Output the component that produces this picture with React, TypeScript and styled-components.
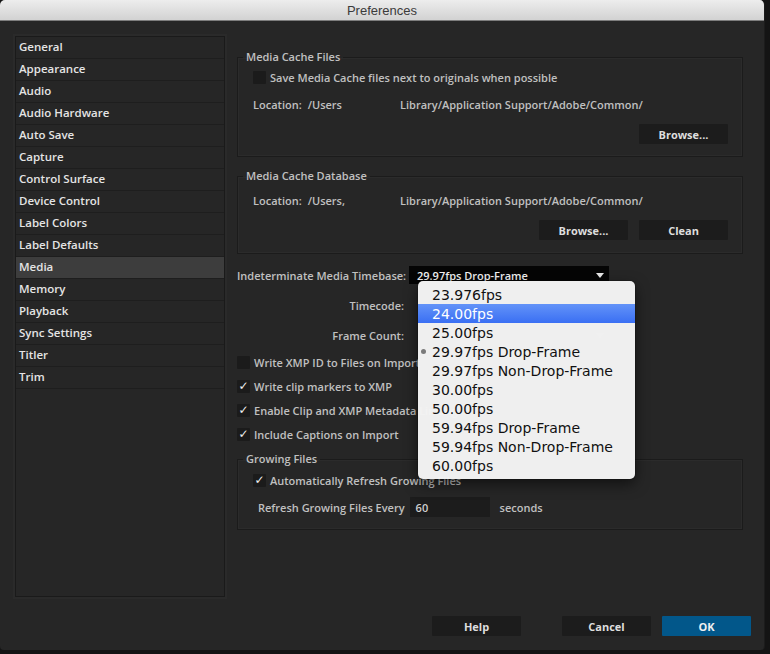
import React from 'react';
import styled, { createGlobalStyle } from 'styled-components';

const Global = createGlobalStyle`
  html, body { margin: 0; padding: 0; background: #141414; }
  body { font-family: "Open Sans", "DejaVu Sans", sans-serif; }
  * { box-sizing: border-box; }
`;

const Screen = styled.div`
  width: 770px;
  height: 654px;
  background: #141414;
  overflow: hidden;
`;

const Window = styled.div`
  width: 765px;
  height: 650px;
  background: #262626;
  display: flex;
  flex-direction: column;
  border-radius: 5px 5px 4px 4px;
  overflow: hidden;
  border-right: 1px solid #1c1c1c;
`;

const TitleBar = styled.div`
  height: 21px;
  flex: none;
  background: linear-gradient(#ededed, #d2d2d2);
  border-bottom: 1px solid #7d7d7d;
  display: flex;
  align-items: center;
  justify-content: center;
  font-family: "Liberation Sans", Arial, sans-serif;
  font-size: 13px;
  color: #3b3b3b;
`;

const Body = styled.div`
  flex: 1;
  display: flex;
  flex-direction: column;
  padding: 15px 13px 0 15px;
`;

const ContentRow = styled.div`
  display: flex;
  height: 561px;
  gap: 12px;
`;

const Sidebar = styled.ul`
  list-style: none;
  margin: 0;
  padding: 0;
  width: 210px;
  height: 561px;
  border: 1px solid #1a1a1a;
  box-shadow: 0 0 0 2px #2a2a2a;
  background: #262626;
`;

const SideItem = styled.li<{ $active?: boolean }>`
  height: 22px;
  line-height: 20px;
  padding-left: 3px;
  border-bottom: 1px solid #1e1e1e;
  font-size: 11.5px;
  font-weight: 600;
  color: #e4e4e4;
  background: ${(p) => (p.$active ? '#3d3d3d' : 'transparent')};
`;

const Main = styled.div`
  width: 506px;
  display: flex;
  flex-direction: column;
  font-size: 11px;
  font-weight: 600;
  color: #c0c0c0;
`;

const Group = styled.fieldset<{ $mt: number }>`
  margin: ${(p) => p.$mt}px 0 0;
  padding: 0;
  min-width: 0;
  border: 1px solid #1b1b1b;
  box-shadow: inset 0 0 0 1px #2b2b2b;
`;

const Legend = styled.legend`
  margin-left: 5px;
  padding: 0 3px;
  line-height: 14px;
  font-size: 11px;
  font-weight: 600;
  color: #c0c0c0;
`;

const GroupBody = styled.div<{ $pt: number; $pb: number }>`
  padding: ${(p) => p.$pt}px 14px ${(p) => p.$pb}px 15px;
  display: flex;
  flex-direction: column;
`;

const Row = styled.div<{ $mt?: number; $h?: number; $ml?: number }>`
  display: flex;
  align-items: center;
  height: ${(p) => p.$h ?? 18}px;
  margin-top: ${(p) => p.$mt ?? 0}px;
  margin-left: ${(p) => p.$ml ?? 0}px;
  white-space: nowrap;
`;

const ButtonRow = styled.div<{ $mt: number }>`
  display: flex;
  justify-content: flex-end;
  gap: 11px;
  margin-top: ${(p) => p.$mt}px;
`;

const Button = styled.button<{ $primary?: boolean; $mr?: number }>`
  width: 89px;
  height: 20px;
  border: none;
  border-radius: 1px;
  padding: 0;
  margin-right: ${(p) => p.$mr ?? 0}px;
  background: ${(p) => (p.$primary ? '#02578a' : '#1c1c1c')};
  color: ${(p) => (p.$primary ? '#f0f0f0' : '#dedede')};
  font-family: "Open Sans", "DejaVu Sans", sans-serif;
  font-size: 11px;
  font-weight: 700;
`;

const PathHead = styled.span`
  width: 147px;
  flex: none;
`;

const Gap = styled.span`
  display: inline-block;
  width: 6px;
`;

const Box = styled.span<{ $checked?: boolean }>`
  width: 13px;
  height: 13px;
  flex: none;
  background: #1b1b1b;
  border-radius: 1px;
  margin-right: 4px;
  display: flex;
  align-items: center;
  justify-content: center;
  color: #f0f0f0;
  font-family: "DejaVu Sans", sans-serif;
  font-size: 12px;
  font-weight: 700;
  line-height: 13px;
`;

const FormRow = styled.div<{ $mt: number }>`
  display: flex;
  align-items: center;
  height: 18px;
  margin-top: ${(p) => p.$mt}px;
`;

const FormLabel = styled.span`
  width: 168px;
  text-align: right;
  padding-right: 1px;
  flex: none;
  white-space: nowrap;
`;

const SelectWrap = styled.div`
  position: relative;
  margin-left: 4px;
`;

const Select = styled.div<{ $disabled?: boolean }>`
  width: 200px;
  height: 18px;
  background: ${(p) => (p.$disabled ? 'transparent' : '#050505')};
  color: #f2f2f2;
  display: flex;
  align-items: center;
  justify-content: space-between;
  padding: 0 5px 0 8px;
  font-size: 11px;
  font-weight: 600;
`;

const Arrow = styled.span<{ $dim?: boolean }>`
  width: 0;
  height: 0;
  border-left: 4px solid transparent;
  border-right: 4px solid transparent;
  border-top: 5px solid ${(p) => (p.$dim ? '#555' : '#e8e8e8')};
`;

const Menu = styled.ul`
  position: absolute;
  left: 9px;
  top: 15px;
  z-index: 10;
  width: 217px;
  margin: 0;
  padding: 4px 0;
  list-style: none;
  background: rgba(243, 243, 243, 0.985);
  border-radius: 5px;
  box-shadow: 0 5px 14px rgba(0, 0, 0, 0.55), 0 0 0 1px rgba(0, 0, 0, 0.15);
`;

const MenuItem = styled.li<{ $hl?: boolean }>`
  height: 19px;
  display: flex;
  align-items: center;
  font-family: "DejaVu Sans", sans-serif;
  font-size: 14px;
  font-weight: 400;
  color: ${(p) => (p.$hl ? '#ffffff' : '#111111')};
  background: ${(p) => (p.$hl ? 'linear-gradient(#6393f8, #3a6ff3)' : 'transparent')};
`;

const Mark = styled.span`
  width: 14px;
  flex: none;
  display: flex;
  align-items: center;
  padding-left: 3px;
`;

const Dot = styled.span`
  width: 5px;
  height: 5px;
  border-radius: 50%;
  background: #7a7a7a;
`;

const Input = styled.div`
  width: 80px;
  height: 20px;
  background: #1c1c1c;
  color: #cfcfcf;
  display: flex;
  align-items: center;
  padding-left: 6px;
  margin: 0 10px 0 5px;
`;

const Footer = styled.div`
  display: flex;
  justify-content: flex-end;
  gap: 11px;
  margin-top: 19px;
`;

const sideItems = [
  'General', 'Appearance', 'Audio', 'Audio Hardware', 'Auto Save', 'Capture',
  'Control Surface', 'Device Control', 'Label Colors', 'Label Defaults', 'Media',
  'Memory', 'Playback', 'Sync Settings', 'Titler', 'Trim',
];

const rates = [
  '23.976fps', '24.00fps', '25.00fps', '29.97fps Drop-Frame', '29.97fps Non-Drop-Frame',
  '30.00fps', '50.00fps', '59.94fps Drop-Frame', '59.94fps Non-Drop-Frame', '60.00fps',
];

const Check: React.FC<{ checked?: boolean; label: string; mt?: number; ml?: number }> = ({ checked, label, mt, ml }) => (
  <Row $mt={mt} $ml={ml}>
    <Box $checked={checked}>{checked ? '✓' : ''}</Box>
    <span>{label}</span>
  </Row>
);

export default function App() {
  return (
    <Screen>
      <Global />
      <Window>
        <TitleBar>Preferences</TitleBar>
        <Body>
          <ContentRow>
            <Sidebar>
              {sideItems.map((s) => (
                <SideItem key={s} $active={s === 'Media'}>{s}</SideItem>
              ))}
            </Sidebar>
            <Main>
              <Group $mt={14}>
                <Legend>Media Cache Files</Legend>
                <GroupBody $pt={4} $pb={12}>
                  <Check label="Save Media Cache files next to originals when possible" />
                  <Row $mt={9}>
                    <PathHead>Location:<Gap />/Users</PathHead>
                    <span>Library/Application Support/Adobe/Common/</span>
                  </Row>
                  <ButtonRow $mt={11}>
                    <Button>Browse...</Button>
                  </ButtonRow>
                </GroupBody>
              </Group>

              <Group $mt={12}>
                <Legend>Media Cache Database</Legend>
                <GroupBody $pt={8} $pb={13}>
                  <Row>
                    <PathHead>Location:<Gap />/Users,</PathHead>
                    <span>Library/Application Support/Adobe/Common/</span>
                  </Row>
                  <ButtonRow $mt={11}>
                    <Button>Browse...</Button>
                    <Button>Clean</Button>
                  </ButtonRow>
                </GroupBody>
              </Group>

              <FormRow $mt={12}>
                <FormLabel>Indeterminate Media Timebase:</FormLabel>
                <SelectWrap>
                  <Select>
                    <span>29.97fps Drop-Frame</span>
                    <Arrow />
                  </Select>
                  <Menu>
                    {rates.map((r, i) => (
                      <MenuItem key={r} $hl={i === 1}>
                        <Mark>{i === 3 ? <Dot /> : null}</Mark>
                        {r}
                      </MenuItem>
                    ))}
                  </Menu>
                </SelectWrap>
              </FormRow>
              <FormRow $mt={12}>
                <FormLabel>Timecode:</FormLabel>
                <SelectWrap>
                  <Select $disabled>
                    <span />
                    <Arrow $dim />
                  </Select>
                </SelectWrap>
              </FormRow>
              <FormRow $mt={12}>
                <FormLabel>Frame Count:</FormLabel>
                <SelectWrap>
                  <Select $disabled>
                    <span />
                    <Arrow $dim />
                  </Select>
                </SelectWrap>
              </FormRow>

              <Check mt={9} label="Write XMP ID to Files on Import" />
              <Check mt={6} checked label="Write clip markers to XMP" />
              <Check mt={6} checked label="Enable Clip and XMP Metadata Linking" />
              <Check mt={6} checked label="Include Captions on Import" />

              <Group $mt={9}>
                <Legend>Growing Files</Legend>
                <GroupBody $pt={5} $pb={12}>
                  <Check checked label="Automatically Refresh Growing Files" />
                  <Row $mt={8} $h={20} $ml={5}>
                    <span>Refresh Growing Files Every</span>
                    <Input>60</Input>
                    <span>seconds</span>
                  </Row>
                </GroupBody>
              </Group>
            </Main>
          </ContentRow>
          <Footer>
            <Button $mr={30}>Help</Button>
            <Button>Cancel</Button>
            <Button $primary>OK</Button>
          </Footer>
        </Body>
      </Window>
    </Screen>
  );
}
